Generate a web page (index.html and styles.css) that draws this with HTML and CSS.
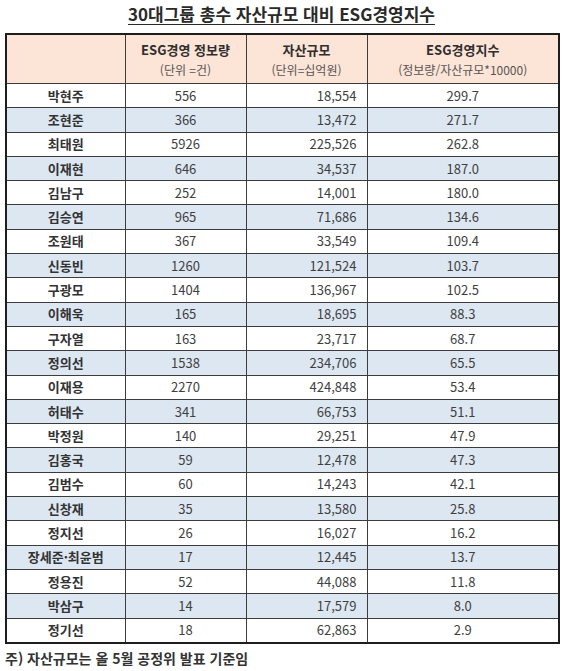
FILE: index.html
```html
<!DOCTYPE html>
<html lang="ko">
<head>
<meta charset="utf-8">
<link rel="stylesheet" href="styles.css">
</head>
<body>
<div class="page">
  <h1 class="title">30대그룹 총수 자산규모 대비 ESG경영지수</h1>
  <table class="grid">
    <colgroup>
      <col class="c1"><col class="c2"><col class="c3"><col class="c4">
    </colgroup>
    <thead>
      <tr>
        <th></th>
        <th><span class="h">ESG경영 정보량</span><span class="sub">(단위 =건)</span></th>
        <th><span class="h">자산규모</span><span class="sub">(단위=십억원)</span></th>
        <th><span class="h">ESG경영지수</span><span class="sub">(정보량/자산규모*10000)</span></th>
      </tr>
    </thead>
    <tbody>
      <tr><td class="name">박현주</td><td>556</td><td class="num">18,554</td><td>299.7</td></tr>
      <tr class="alt"><td class="name">조현준</td><td>366</td><td class="num">13,472</td><td>271.7</td></tr>
      <tr><td class="name">최태원</td><td>5926</td><td class="num">225,526</td><td>262.8</td></tr>
      <tr class="alt"><td class="name">이재현</td><td>646</td><td class="num">34,537</td><td>187.0</td></tr>
      <tr><td class="name">김남구</td><td>252</td><td class="num">14,001</td><td>180.0</td></tr>
      <tr class="alt"><td class="name">김승연</td><td>965</td><td class="num">71,686</td><td>134.6</td></tr>
      <tr><td class="name">조원태</td><td>367</td><td class="num">33,549</td><td>109.4</td></tr>
      <tr class="alt"><td class="name">신동빈</td><td>1260</td><td class="num">121,524</td><td>103.7</td></tr>
      <tr><td class="name">구광모</td><td>1404</td><td class="num">136,967</td><td>102.5</td></tr>
      <tr class="alt"><td class="name">이해욱</td><td>165</td><td class="num">18,695</td><td>88.3</td></tr>
      <tr><td class="name">구자열</td><td>163</td><td class="num">23,717</td><td>68.7</td></tr>
      <tr class="alt"><td class="name">정의선</td><td>1538</td><td class="num">234,706</td><td>65.5</td></tr>
      <tr><td class="name">이재용</td><td>2270</td><td class="num">424,848</td><td>53.4</td></tr>
      <tr class="alt"><td class="name">허태수</td><td>341</td><td class="num">66,753</td><td>51.1</td></tr>
      <tr><td class="name">박정원</td><td>140</td><td class="num">29,251</td><td>47.9</td></tr>
      <tr class="alt"><td class="name">김홍국</td><td>59</td><td class="num">12,478</td><td>47.3</td></tr>
      <tr><td class="name">김범수</td><td>60</td><td class="num">14,243</td><td>42.1</td></tr>
      <tr class="alt"><td class="name">신창재</td><td>35</td><td class="num">13,580</td><td>25.8</td></tr>
      <tr><td class="name">정지선</td><td>26</td><td class="num">16,027</td><td>16.2</td></tr>
      <tr class="alt"><td class="name">장세준·최윤범</td><td>17</td><td class="num">12,445</td><td>13.7</td></tr>
      <tr><td class="name">정용진</td><td>52</td><td class="num">44,088</td><td>11.8</td></tr>
      <tr class="alt"><td class="name">박삼구</td><td>14</td><td class="num">17,579</td><td>8.0</td></tr>
      <tr><td class="name">정기선</td><td>18</td><td class="num">62,863</td><td>2.9</td></tr>
    </tbody>
  </table>
  <p class="note">주) 자산규모는 올 5월 공정위 발표 기준임</p>
</div>
</body>
</html>
```

FILE: styles.css
```css
html, body {
  margin: 0;
  padding: 0;
  background: #ffffff;
}
body {
  font-family: "Noto Sans CJK KR", "Noto Sans", sans-serif;
  color: #3a3a3a;
}
.page {
  width: 570px;
  padding-left: 5px;
  box-sizing: border-box;
}
.title {
  margin: 0;
  width: 553px;
  height: 33px;
  text-align: center;
  font-size: 17px;
  line-height: 28px;
  font-weight: 700;
  color: #2a2a2a;
  text-decoration: underline;
  text-underline-offset: 3px;
  text-decoration-thickness: 1px;
}
.grid {
  width: 553px;
  table-layout: fixed;
  border-collapse: collapse;
  border: 2px solid #1e1e1e;
}
.c1 { width: 119px; }
.c2 { width: 121px; }
.c3 { width: 121px; }
.c4 { width: 192px; }
.grid th, .grid td {
  border: 1px solid #3c3c3c;
  padding: 0;
}
.grid th {
  background: #fce4d6;
  height: 48px;
  text-align: center;
  vertical-align: middle;
  font-weight: 400;
}
.h {
  display: block;
  font-size: 13px;
  font-weight: 700;
  line-height: 21px;
  color: #2e2e2e;
}
.sub {
  display: block;
  font-size: 12px;
  line-height: 20px;
  color: #555555;
}
.grid td {
  height: 23.3px;
  font-size: 13px;
  line-height: 18px;
  text-align: center;
  vertical-align: middle;
  color: #3f3f3f;
}
.grid tr.alt td {
  background: #dde7f2;
}
.grid td.name {
  font-weight: 700;
  color: #333333;
}
.grid td.num {
  text-align: right;
  padding-right: 10px;
}
.note {
  margin: 4px 0 0 0;
  font-size: 14px;
  line-height: 20px;
  font-weight: 700;
  color: #333333;
}
```
